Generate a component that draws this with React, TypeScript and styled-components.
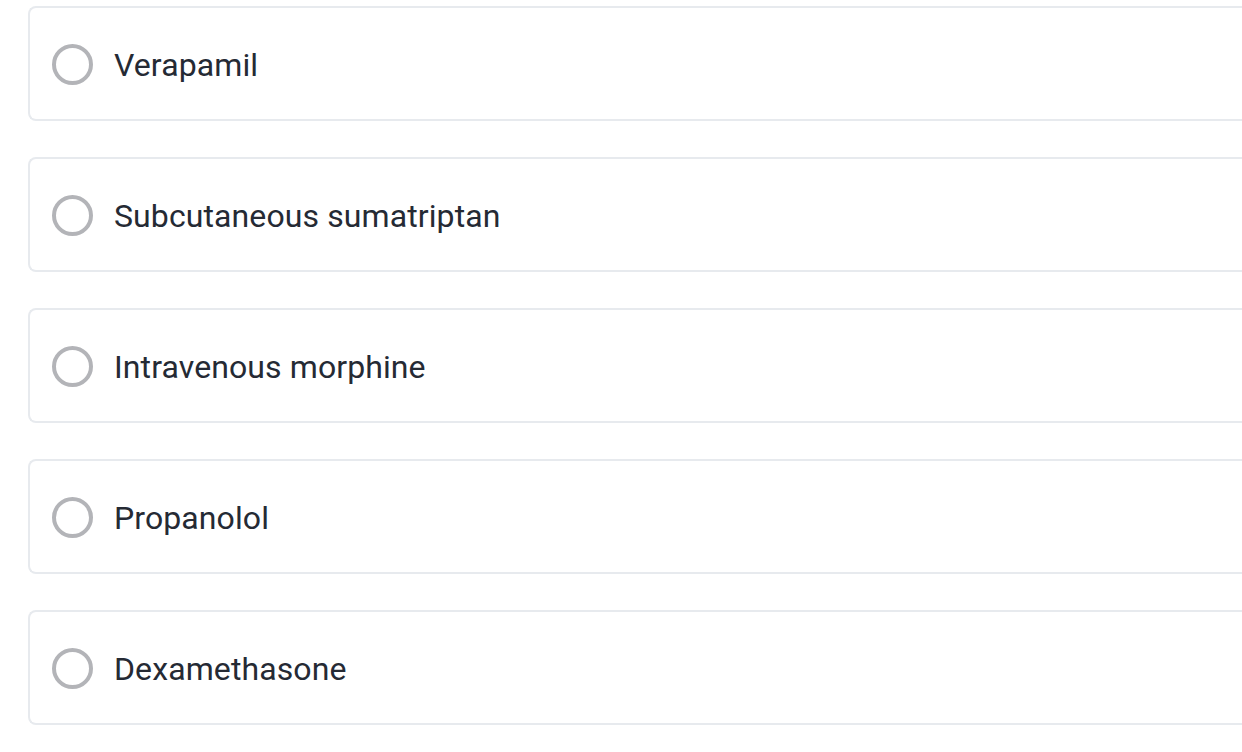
import { createGlobalStyle, styled } from "styled-components";

const GlobalStyle = createGlobalStyle`
  html, body {
    margin: 0;
    padding: 0;
    background: #ffffff;
    overflow: hidden;
  }
  body {
    font-family: Roboto, "Liberation Sans", sans-serif;
  }
`;

const options = [
  "Verapamil",
  "Subcutaneous sumatriptan",
  "Intravenous morphine",
  "Propanolol",
  "Dexamethasone",
];

export default function App() {
  return (
    <>
      <GlobalStyle />
      <List>
        {options.map((label) => (
          <Option key={label}>
            <Radio type="radio" name="answer" />
            <Label>{label}</Label>
          </Option>
        ))}
      </List>
    </>
  );
}

const List = styled.div`
  display: flex;
  flex-direction: column;
  gap: 36px;
  padding: 6px 0 0 28px;
  width: 1242px;
  box-sizing: border-box;
  overflow: hidden;
`;

const Option = styled.label`
  display: flex;
  align-items: center;
  gap: 21px;
  height: 115px;
  width: calc(100% + 20px);
  box-sizing: border-box;
  padding: 2px 0 0 22px;
  border: 2px solid #e7eaee;
  border-right: 0;
  border-radius: 8px 0 0 8px;
  background: #ffffff;
  cursor: pointer;
`;

const Radio = styled.input`
  appearance: none;
  margin: 0;
  width: 41px;
  height: 41px;
  flex-shrink: 0;
  border-radius: 50%;
  border: 4px solid #b3b4b8;
  box-sizing: border-box;
  background: #ffffff;
`;

const Label = styled.span`
  font-size: 32px;
  color: #252a34;
  letter-spacing: 0.1px;
`;
